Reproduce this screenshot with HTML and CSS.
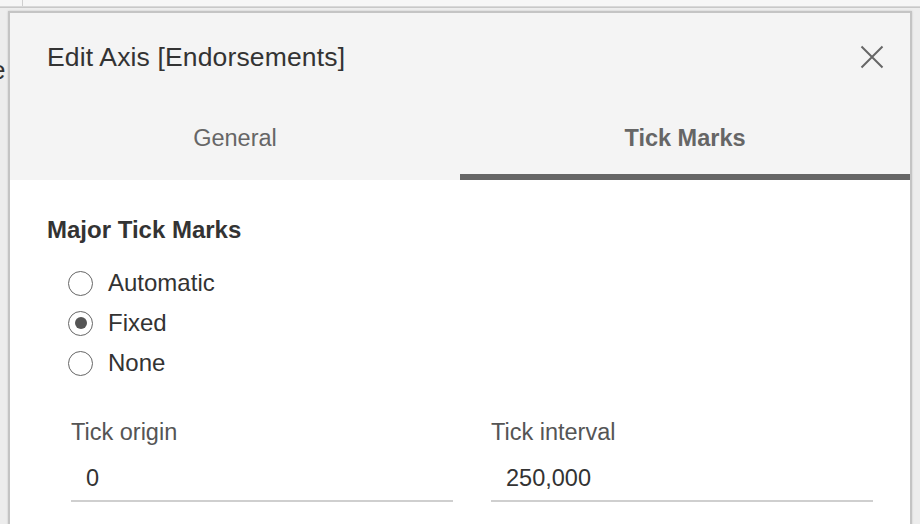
FILE: index.html
```html
<!DOCTYPE html>
<html>
<head>
<meta charset="utf-8">
<link rel="stylesheet" href="styles.css">
</head>
<body>
<div class="page">
  <div class="topbar"><div class="topcell"></div></div>
  <div class="rule"></div>
  <span class="bg-letter">e</span>
</div>
<div class="dialog">
  <div class="header">
    <div class="title">Edit Axis [Endorsements]</div>
    <button class="close" aria-label="Close">
      <svg width="24" height="24" viewBox="0 0 24 24"><path d="M1.5 1.5 L22.5 22.5 M22.5 1.5 L1.5 22.5" stroke="#666" stroke-width="2" fill="none"/></svg>
    </button>
  </div>
  <div class="tabs">
    <div class="tab">General</div>
    <div class="tab active">Tick Marks</div>
  </div>
  <div class="content">
    <div class="section-title">Major Tick Marks</div>
    <div class="radios">
      <div class="radio-row"><span class="radio"></span><span class="radio-label">Automatic</span></div>
      <div class="radio-row"><span class="radio checked"></span><span class="radio-label">Fixed</span></div>
      <div class="radio-row"><span class="radio"></span><span class="radio-label">None</span></div>
    </div>
    <div class="fields">
      <div class="field">
        <div class="field-label">Tick origin</div>
        <div class="field-input">0</div>
      </div>
      <div class="field">
        <div class="field-label">Tick interval</div>
        <div class="field-input">250,000</div>
      </div>
    </div>
  </div>
</div>
</body>
</html>
```
FILE: styles.css
```css
html, body {
  margin: 0;
  padding: 0;
}
body {
  width: 920px;
  height: 524px;
  overflow: hidden;
  background: #ededed;
  font-family: "Liberation Sans", Arial, sans-serif;
  position: relative;
}
.page {
  height: 524px;
}
.topbar {
  height: 6px;
  background: #f6f6f6;
}
.topcell {
  width: 22px;
  height: 6px;
  border-right: 1px solid #cfcfcf;
}
.rule {
  height: 1px;
  background: #c8c8c8;
  margin-top: 13px;
  border-top: 1px solid #d8d8d8;
  position: relative;
  top: -13px;
}
.bg-letter {
  position: absolute;
  left: -9px;
  top: 55px;
  font-size: 26px;
  color: #333;
}
.dialog {
  position: absolute;
  left: 8px;
  top: 11px;
  width: 900px;
  height: 520px;
  border: 2px solid #c4c4c4;
  background: #fff;
  box-shadow: 0 0 2px rgba(0,0,0,0.15);
}
.header {
  height: 88px;
  background: #f4f4f4;
  display: flex;
  align-items: center;
  justify-content: space-between;
  padding: 0 26px 0 37px;
}
.title {
  font-size: 26.5px;
  line-height: 30px;
  color: #333;
  letter-spacing: 0.15px;
}
.close {
  background: none;
  border: 0;
  padding: 0;
  width: 24px;
  height: 24px;
  margin-top: -1px;
  cursor: pointer;
}
.close svg {
  display: block;
}
.tabs {
  display: flex;
  background: #f4f4f4;
}
.tab {
  flex: 1;
  height: 73px;
  padding-top: 2px;
  box-sizing: border-box;
  border-bottom: 6px solid transparent;
  display: flex;
  align-items: center;
  justify-content: center;
  font-size: 23.5px;
  color: #666;
}
.tab.active {
  font-weight: bold;
  border-bottom-color: #666;
}
.tabs .tab {
  height: 79px;
}
.content {
  padding: 36px 37px 0 37px;
}
.section-title {
  font-size: 24px;
  line-height: 28px;
  font-weight: bold;
  color: #333;
}
.radios {
  margin-top: 19px;
  padding-left: 21px;
}
.radio-row {
  height: 40px;
  display: flex;
  align-items: center;
  gap: 15px;
}
.radio {
  width: 23px;
  height: 23px;
  border: 1.5px solid #666;
  border-radius: 50%;
  box-sizing: content-box;
  display: flex;
  align-items: center;
  justify-content: center;
  background: #fff;
}
.radio.checked::after {
  content: "";
  width: 12px;
  height: 12px;
  border-radius: 50%;
  background: #555;
}
.radio-label {
  font-size: 24px;
  color: #333;
}
.fields {
  margin-top: 35px;
  padding-left: 24px;
  display: flex;
  gap: 38px;
}
.field {
  width: 382px;
}
.field-label {
  font-size: 23.5px;
  line-height: 28px;
  color: #555;
}
.field-input {
  margin-top: 18px;
  font-size: 23.5px;
  line-height: 28px;
  color: #333;
  padding: 0 0 8px 15px;
  border-bottom: 2px solid #cfcfcf;
}
```
